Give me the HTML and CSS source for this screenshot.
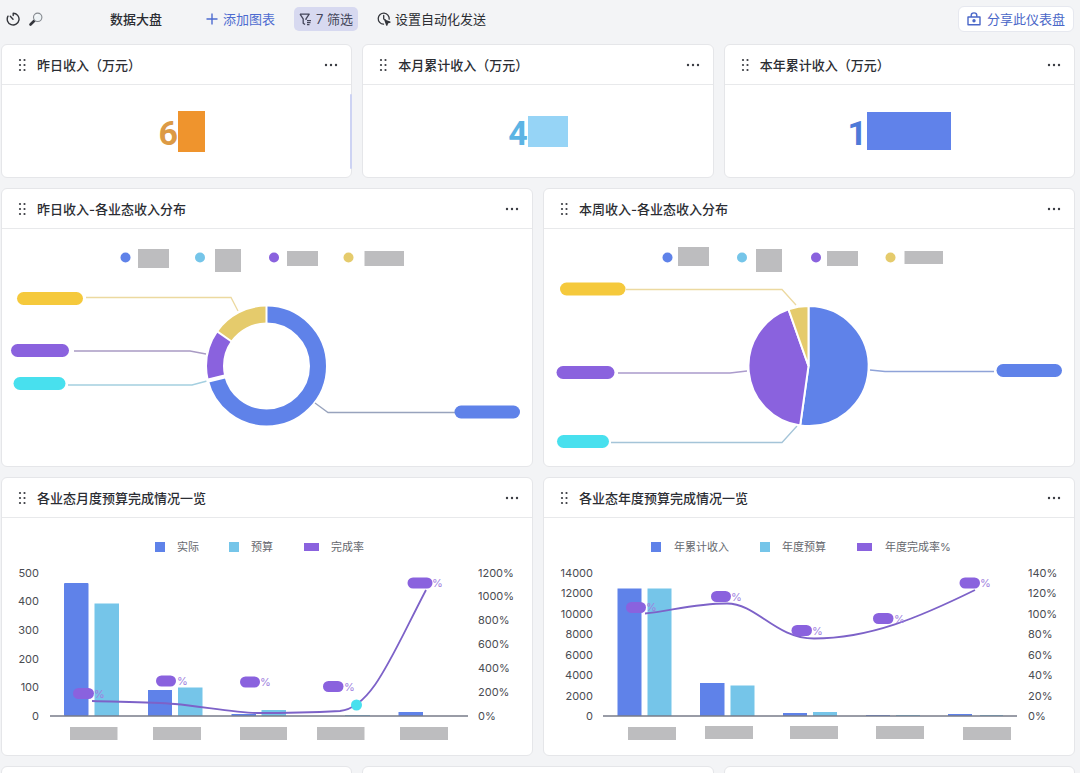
FILE: index.html
```html
<!DOCTYPE html>
<html lang="zh-CN">
<head>
<meta charset="utf-8">
<meta name="viewport" content="width=device-width, initial-scale=1">
<title>数据大盘</title>
<link rel="stylesheet" href="styles.css">
</head>
<body>
<svg class="defs" aria-hidden="true">
  <symbol id="grip" viewBox="0 0 8 14">
    <g fill="#3a3c42"><circle cx="2" cy="2" r="1.100"/><circle cx="6.500" cy="2" r="1.100"/><circle cx="2" cy="7" r="1.100"/><circle cx="6.500" cy="7" r="1.100"/><circle cx="2" cy="12" r="1.100"/><circle cx="6.500" cy="12" r="1.100"/></g>
  </symbol>
  <symbol id="more" viewBox="0 0 14 14">
    <g fill="#3a3c42"><circle cx="2" cy="7" r="1.200"/><circle cx="7" cy="7" r="1.200"/><circle cx="12" cy="7" r="1.200"/></g>
  </symbol>
</svg>

<header class="toolbar">
  <button class="icon-btn" type="button" aria-label="刷新">
    <svg width="14" height="14" viewBox="0 0 14 14" fill="none" stroke="#33353b" stroke-width="1.4" stroke-linecap="round"><path d="M7.200 1.200A5.900 5.900 0 1 1 2 4.200M7.200 1.200V3.500M4.300 4.300L7 7.200"/></svg>
  </button>
  <button class="icon-btn icon-btn--search" type="button" aria-label="搜索">
    <svg width="16" height="16" viewBox="0 0 16 16"><path d="M2.500 13.500L6.300 9.800" stroke="#33353b" stroke-width="2.600" stroke-linecap="round"/><circle cx="9.700" cy="6.300" r="4.200" fill="#eef3f6" stroke="#85898f" stroke-width="1.100"/><path d="M7.500 5.500Q8.300 4 9.800 3.800" fill="none" stroke="#fff" stroke-width="1"/></svg>
  </button>
  <h1 class="toolbar__title">数据大盘</h1>
  <button class="tool tool--add" type="button">
    <svg width="12" height="12" viewBox="0 0 12 12" stroke="#4d6bd0" stroke-width="1.400"><path d="M6 .5V11.500M.5 6H11.500"/></svg>
    添加图表
  </button>
  <button class="tool tool--filter" type="button">
    <svg width="13" height="13" viewBox="0 0 13 13" fill="none" stroke="#43455a" stroke-width="1.300" stroke-linejoin="round"><path d="M1 1.200H10.200L7 5.800V7M1 1.200L4.200 5.800V10.200L6 11.600M8 7.700H12M8 9.700H11.500M8 11.700H10.500"/></svg>
    7 筛选
  </button>
  <button class="tool tool--auto" type="button">
    <svg width="14" height="14" viewBox="0 0 14 14" fill="none" stroke="#33353b" stroke-width="1.300" stroke-linejoin="round" stroke-linecap="round"><path d="M12.200 7.200A5.500 5.500 0 1 0 6.500 12.200M6.700 3.500V7L8.500 8"/><path d="M8 8.300L13 10.100L10.600 10.900L9.800 13.200Z" fill="#33353b"/></svg>
    设置自动化发送
  </button>
  <button class="share" type="button">
    <svg width="14" height="14" viewBox="0 0 14 14" fill="none" stroke="#4a67c8" stroke-width="1.400" stroke-linejoin="round"><path d="M1 5H13V12.700H1ZM4.200 5V3.500A2.800 2.600 0 0 1 9.800 3.500V5"/><circle cx="7" cy="8.800" r="1" fill="#4a67c8"/></svg>
    分享此仪表盘
  </button>
</header>

<main class="board">
  <section class="row row--three">
    <article class="card">
      <header class="card__head"><svg class="grip"><use href="#grip"/></svg><h2>昨日收入（万元）</h2><button class="more" type="button" aria-label="更多"><svg><use href="#more"/></svg></button></header>
      <div class="kpi kpi--orange"><span>6</span><i class="mask"></i></div>
      <i class="thumb"></i>
    </article>
    <article class="card">
      <header class="card__head"><svg class="grip"><use href="#grip"/></svg><h2>本月累计收入（万元）</h2><button class="more" type="button" aria-label="更多"><svg><use href="#more"/></svg></button></header>
      <div class="kpi kpi--sky"><span>4</span><i class="mask"></i></div>
    </article>
    <article class="card">
      <header class="card__head"><svg class="grip"><use href="#grip"/></svg><h2>本年累计收入（万元）</h2><button class="more" type="button" aria-label="更多"><svg><use href="#more"/></svg></button></header>
      <div class="kpi kpi--blue"><span>1</span><i class="mask"></i></div>
    </article>
  </section>

  <section class="row row--two">
    <article class="card">
      <header class="card__head"><svg class="grip"><use href="#grip"/></svg><h2>昨日收入-各业态收入分布</h2><button class="more" type="button" aria-label="更多"><svg><use href="#more"/></svg></button></header>
      <svg class="chart" viewBox="2 229 530 237">
        <circle class="blue" cx="125.500" cy="257.500" r="5"/><circle class="sky" cx="200" cy="257.500" r="5"/><circle class="purple" cx="274" cy="257.500" r="5"/><circle class="gold" cx="348.500" cy="257.500" r="5"/>
        <g class="gray"><rect x="138" y="249" width="31" height="19"/><rect x="215" y="249" width="26" height="23"/><rect x="287" y="251" width="31" height="15"/><rect x="364.500" y="251" width="39.500" height="15"/></g>
        <g class="leader">
          <path d="M86 297.500H231L238 311" stroke="#ecd9a0"/>
          <path d="M74 351H190L206 354" stroke="#a99bc4"/>
          <path d="M68 385H192L207 381" stroke="#a4cfe0"/>
          <path d="M315 403L328 412.500H455" stroke="#98a3bd"/>
        </g>
        <g class="ring" transform="rotate(-90 266.500 366)">
          <circle cx="266.500" cy="366" r="51.500" pathLength="360" stroke="#5f82e9" stroke-dasharray="256 360"/>
          <circle cx="266.500" cy="366" r="51.500" pathLength="360" stroke="#8a62de" stroke-dasharray="49 360" stroke-dashoffset="-256"/>
          <circle cx="266.500" cy="366" r="51.500" pathLength="360" stroke="#e5cb6c" stroke-dasharray="55 360" stroke-dashoffset="-305"/>
        </g>
        <path d="M266.500 304V326M215.700 330.400L233.700 343" stroke="#fff" stroke-width="2"/>
        <path d="M206.400 381L227.700 375.700" stroke="#fff" stroke-width="4"/>
        <rect fill="#f5c93c" x="17" y="292" width="66" height="13" rx="6.500"/>
        <rect class="purple" x="11" y="344" width="58" height="13" rx="6.500"/>
        <rect fill="#48e0ee" x="13.500" y="377" width="52" height="13" rx="6.500"/>
        <rect class="blue" x="454.500" y="405.500" width="65.500" height="13" rx="6.500"/>
      </svg>
    </article>
    <article class="card">
      <header class="card__head"><svg class="grip"><use href="#grip"/></svg><h2>本周收入-各业态收入分布</h2><button class="more" type="button" aria-label="更多"><svg><use href="#more"/></svg></button></header>
      <svg class="chart" viewBox="544 229 530 237">
        <circle class="blue" cx="667.500" cy="257.500" r="5"/><circle class="sky" cx="742" cy="257.500" r="5"/><circle class="purple" cx="816" cy="257.500" r="5"/><circle class="gold" cx="890.500" cy="257.500" r="5"/>
        <g class="gray"><rect x="678" y="247" width="31" height="19"/><rect x="756" y="249" width="26" height="23"/><rect x="827" y="251" width="31" height="15"/><rect x="904.500" y="251" width="38.500" height="13"/></g>
        <g class="leader">
          <path d="M626 289.500H782L796 305" stroke="#ecd9a0"/>
          <path d="M618 373H730L747 371" stroke="#ab9bcc"/>
          <path d="M611 442.500H782L797 426" stroke="#a4c4d8"/>
          <path d="M870 370L885 371.500H994" stroke="#8fa3d8"/>
        </g>
        <g stroke="#fff" stroke-width="2">
          <path class="blue" d="M808.500 366V306A60 60 0 1 1 800.200 425.400Z"/>
          <path class="purple" d="M808.500 366L800.200 425.400A60 60 0 0 1 788.500 309.400Z"/>
          <path class="gold" d="M808.500 366L788.500 309.400A60 60 0 0 1 808.500 306Z"/>
        </g>
        <rect fill="#f5c93c" x="560" y="282.500" width="65.500" height="13" rx="6.500"/>
        <rect class="purple" x="556.500" y="366" width="58" height="13" rx="6.500"/>
        <rect fill="#48e0ee" x="557" y="435" width="52" height="13" rx="6.500"/>
        <rect class="blue" x="996.500" y="364" width="65.500" height="13" rx="6.500"/>
      </svg>
    </article>
  </section>

  <section class="row row--two">
    <article class="card">
      <header class="card__head"><svg class="grip"><use href="#grip"/></svg><h2>各业态月度预算完成情况一览</h2><button class="more" type="button" aria-label="更多"><svg><use href="#more"/></svg></button></header>
      <svg class="chart" viewBox="2 518 530 237">
        <rect class="blue" x="155" y="542" width="10" height="10"/><rect class="sky" x="229" y="542" width="10" height="10"/><rect class="purple" x="304" y="543" width="15" height="8"/>
        <g class="legend"><text x="177" y="551">实际</text><text x="251" y="551">预算</text><text x="331" y="551">完成率</text></g>
        <g class="axis axis--left"><text x="39" y="577">500</text><text x="39" y="605">400</text><text x="39" y="634">300</text><text x="39" y="663">200</text><text x="39" y="691">100</text><text x="39" y="720">0</text></g>
        <g class="axis"><text x="478" y="577">1200%</text><text x="478" y="600">1000%</text><text x="478" y="624">800%</text><text x="478" y="648">600%</text><text x="478" y="672">400%</text><text x="478" y="696">200%</text><text x="478" y="720">0%</text></g>
        <g class="blue"><rect x="64" y="583" width="24.500" height="133" rx="1"/><rect x="148" y="690" width="24" height="26"/><rect x="231.500" y="714" width="24.500" height="2"/><rect x="398.500" y="712" width="24.500" height="4"/></g>
        <g class="sky"><rect x="94.500" y="603.500" width="24.500" height="112.500"/><rect x="178" y="687.500" width="24.500" height="28.500"/><rect x="261.500" y="710" width="24.500" height="6"/><rect x="345" y="715" width="25" height="1"/></g>
        <path d="M50 716H468" stroke="#777b89" stroke-width="1.500"/>
        <path class="trend" d="M92 701C120 702 150 702 175 704S235 713 257 713S320 712 340 711C372 708 392 655 426 590"/>
        <circle cx="356.500" cy="705" r="5.500" fill="#48e0ee"/>
        <g class="purple"><rect x="73" y="688" width="21" height="11" rx="5.500"/><rect x="156" y="675.500" width="20" height="11" rx="5.500"/><rect x="240" y="676.500" width="20" height="11" rx="5.500"/><rect x="323" y="681" width="20.500" height="11" rx="5.500"/><rect x="407.500" y="577.500" width="25" height="11" rx="5.500"/></g>
        <g class="pct"><text x="94" y="698">%</text><text x="177" y="685">%</text><text x="260" y="686">%</text><text x="344" y="691">%</text><text x="432" y="587">%</text></g>
        <g class="gray"><rect x="70" y="727" width="47.500" height="13"/><rect x="153" y="727" width="48" height="13"/><rect x="240" y="727" width="47" height="13"/><rect x="317" y="727" width="47.500" height="13"/><rect x="400" y="727" width="48" height="13"/></g>
      </svg>
    </article>
    <article class="card">
      <header class="card__head"><svg class="grip"><use href="#grip"/></svg><h2>各业态年度预算完成情况一览</h2><button class="more" type="button" aria-label="更多"><svg><use href="#more"/></svg></button></header>
      <svg class="chart" viewBox="544 518 530 237">
        <rect class="blue" x="651" y="542" width="10" height="10"/><rect class="sky" x="760" y="542" width="10" height="10"/><rect class="purple" x="857" y="543" width="15" height="8"/>
        <g class="legend"><text x="674" y="551">年累计收入</text><text x="782" y="551">年度预算</text><text x="885" y="551">年度完成率%</text></g>
        <g class="axis axis--left"><text x="593" y="577">14000</text><text x="593" y="597">12000</text><text x="593" y="618">10000</text><text x="593" y="638">8000</text><text x="593" y="659">6000</text><text x="593" y="679">4000</text><text x="593" y="700">2000</text><text x="593" y="720">0</text></g>
        <g class="axis"><text x="1028" y="577">140%</text><text x="1028" y="597">120%</text><text x="1028" y="618">100%</text><text x="1028" y="638">80%</text><text x="1028" y="659">60%</text><text x="1028" y="679">40%</text><text x="1028" y="700">20%</text><text x="1028" y="720">0%</text></g>
        <g class="blue"><rect x="617.500" y="588.500" width="24" height="127.500"/><rect x="700" y="683" width="24.500" height="33"/><rect x="783" y="713" width="24" height="3"/><rect x="866" y="715" width="24" height="1"/><rect x="948" y="714" width="24" height="2"/></g>
        <g class="sky"><rect x="647.500" y="588.500" width="24" height="127.500"/><rect x="730.500" y="685.500" width="24" height="30.500"/><rect x="813" y="712" width="24" height="4"/><rect x="896" y="715" width="24" height="1"/><rect x="980" y="715" width="23" height="1"/></g>
        <path d="M603 716H1017" stroke="#777b89" stroke-width="1.500"/>
        <path class="trend" d="M645 613.500C670 611 695 603.500 727 603.500C757 603.500 775 638.500 814 638.500C870 638.500 920 617 975 590"/>
        <g class="purple"><rect x="626" y="602" width="20" height="11" rx="5.500"/><rect x="711" y="591" width="20" height="11" rx="5.500"/><rect x="791.500" y="625" width="20.500" height="11" rx="5.500"/><rect x="873" y="613" width="20.500" height="11" rx="5.500"/><rect x="959.500" y="577.500" width="20.500" height="11" rx="5.500"/></g>
        <g class="pct"><text x="646" y="611">%</text><text x="731" y="601">%</text><text x="812" y="635">%</text><text x="894" y="623">%</text><text x="980" y="587">%</text></g>
        <g class="gray"><rect x="628" y="727" width="48" height="13"/><rect x="705" y="726" width="48" height="13"/><rect x="790" y="726" width="48" height="13"/><rect x="876" y="726" width="48" height="13"/><rect x="963" y="727" width="48" height="13"/></g>
      </svg>
    </article>
  </section>

  <section class="row row--three">
    <article class="card card--empty"></article>
    <article class="card card--empty"></article>
    <article class="card card--empty"></article>
  </section>
</main>
</body>
</html>
```

FILE: styles.css
```css
* { box-sizing: border-box; }

body {
  margin: 0;
  height: 100vh;
  overflow: hidden;
  background: #f3f4f6;
  color: #2b2d33;
  font-family: Inter, "Noto Sans CJK SC", sans-serif;
  font-size: 13px;
  line-height: 20px;
}

.defs { position: absolute; width: 0; height: 0; }

h1, h2 { margin: 0; font-size: 13px; font-weight: 500; }

button {
  margin: 0;
  padding: 0;
  border: 0;
  background: none;
  color: inherit;
  font: inherit;
  cursor: pointer;
}

button svg { display: block; flex: none; }

.toolbar {
  display: flex;
  align-items: center;
  height: 44px;
  padding: 0 6px 6px;
  white-space: nowrap;
}

.icon-btn--search { margin-left: 8px; }
.toolbar__title { margin-left: 66px; }

.tool, .share {
  display: flex;
  align-items: center;
  gap: 4px;
  height: 24px;
}

.tool--add { margin-left: 44px; gap: 5px; color: #4d6bd0; }
.tool--filter {
  margin-left: 19px;
  padding: 0 5px;
  border-radius: 5px;
  background: #d7d9f0;
  color: #43455a;
}
.tool--auto { margin-left: 19px; }

.share {
  gap: 6px;
  height: 26px;
  margin-left: auto;
  padding: 0 8px;
  border: 1px solid #e6e8ef;
  border-radius: 6px;
  background: #fff;
  color: #4a67c8;
}

.board {
  display: flex;
  flex-direction: column;
  gap: 10px;
  padding: 0 5px 0 1px;
}

.row { display: grid; gap: 10px; }
.row--two { grid-template-columns: 1fr 1fr; }
.row--three { grid-template-columns: 1fr 1fr 1fr; }

.card {
  position: relative;
  min-width: 0;
  border: 1px solid #e5e6e9;
  border-radius: 6px;
  background: #fff;
}

.card--empty { height: 134px; }

.card__head {
  display: flex;
  align-items: center;
  height: 40px;
  padding: 0 13px 0 16px;
  border-bottom: 1px solid #e8e9eb;
}

.grip { width: 8px; height: 14px; margin-right: 11px; }
.more { margin-left: auto; }
.more svg { width: 14px; height: 14px; }

.kpi {
  display: flex;
  align-items: center;
  justify-content: center;
  height: 92px;
  font-family: Roboto, sans-serif;
  font-size: 34px;
  font-weight: 700;
  line-height: 40px;
}

.kpi span { padding-top: 4px; }
.mask { display: block; background: currentColor; }

.kpi--orange { padding-left: 10px; color: #dc9a45; }
.kpi--orange .mask { width: 27px; height: 41px; color: #ef942d; }
.kpi--sky { color: #5cb4e4; }
.kpi--sky .mask { width: 40px; height: 31px; color: #96d4f6; }
.kpi--blue { color: #4f7ad8; }
.kpi--blue .mask { width: 84px; height: 38px; color: #6082ea; }

.thumb {
  position: absolute;
  top: 49px;
  right: -1px;
  bottom: 8px;
  width: 2px;
  border-radius: 1px;
  background: #cdd3f3;
}

.chart { display: block; width: 100%; height: auto; }

.blue { fill: #5f82e9; }
.sky { fill: #75c5e9; }
.purple { fill: #8a62de; }
.gold { fill: #e5cb6c; }
.gray { fill: #bdbdbf; }

.leader { fill: none; stroke-width: 1.3; }
.ring { fill: none; stroke-width: 16; }
.trend { fill: none; stroke: #7d62c8; stroke-width: 1.8; }

.legend, .axis, .pct { font-size: 11px; }
.legend { fill: #66686e; }
.axis { fill: #4a4c52; }
.axis--left { text-anchor: end; }
.pct { fill: #a07fe0; }
```
